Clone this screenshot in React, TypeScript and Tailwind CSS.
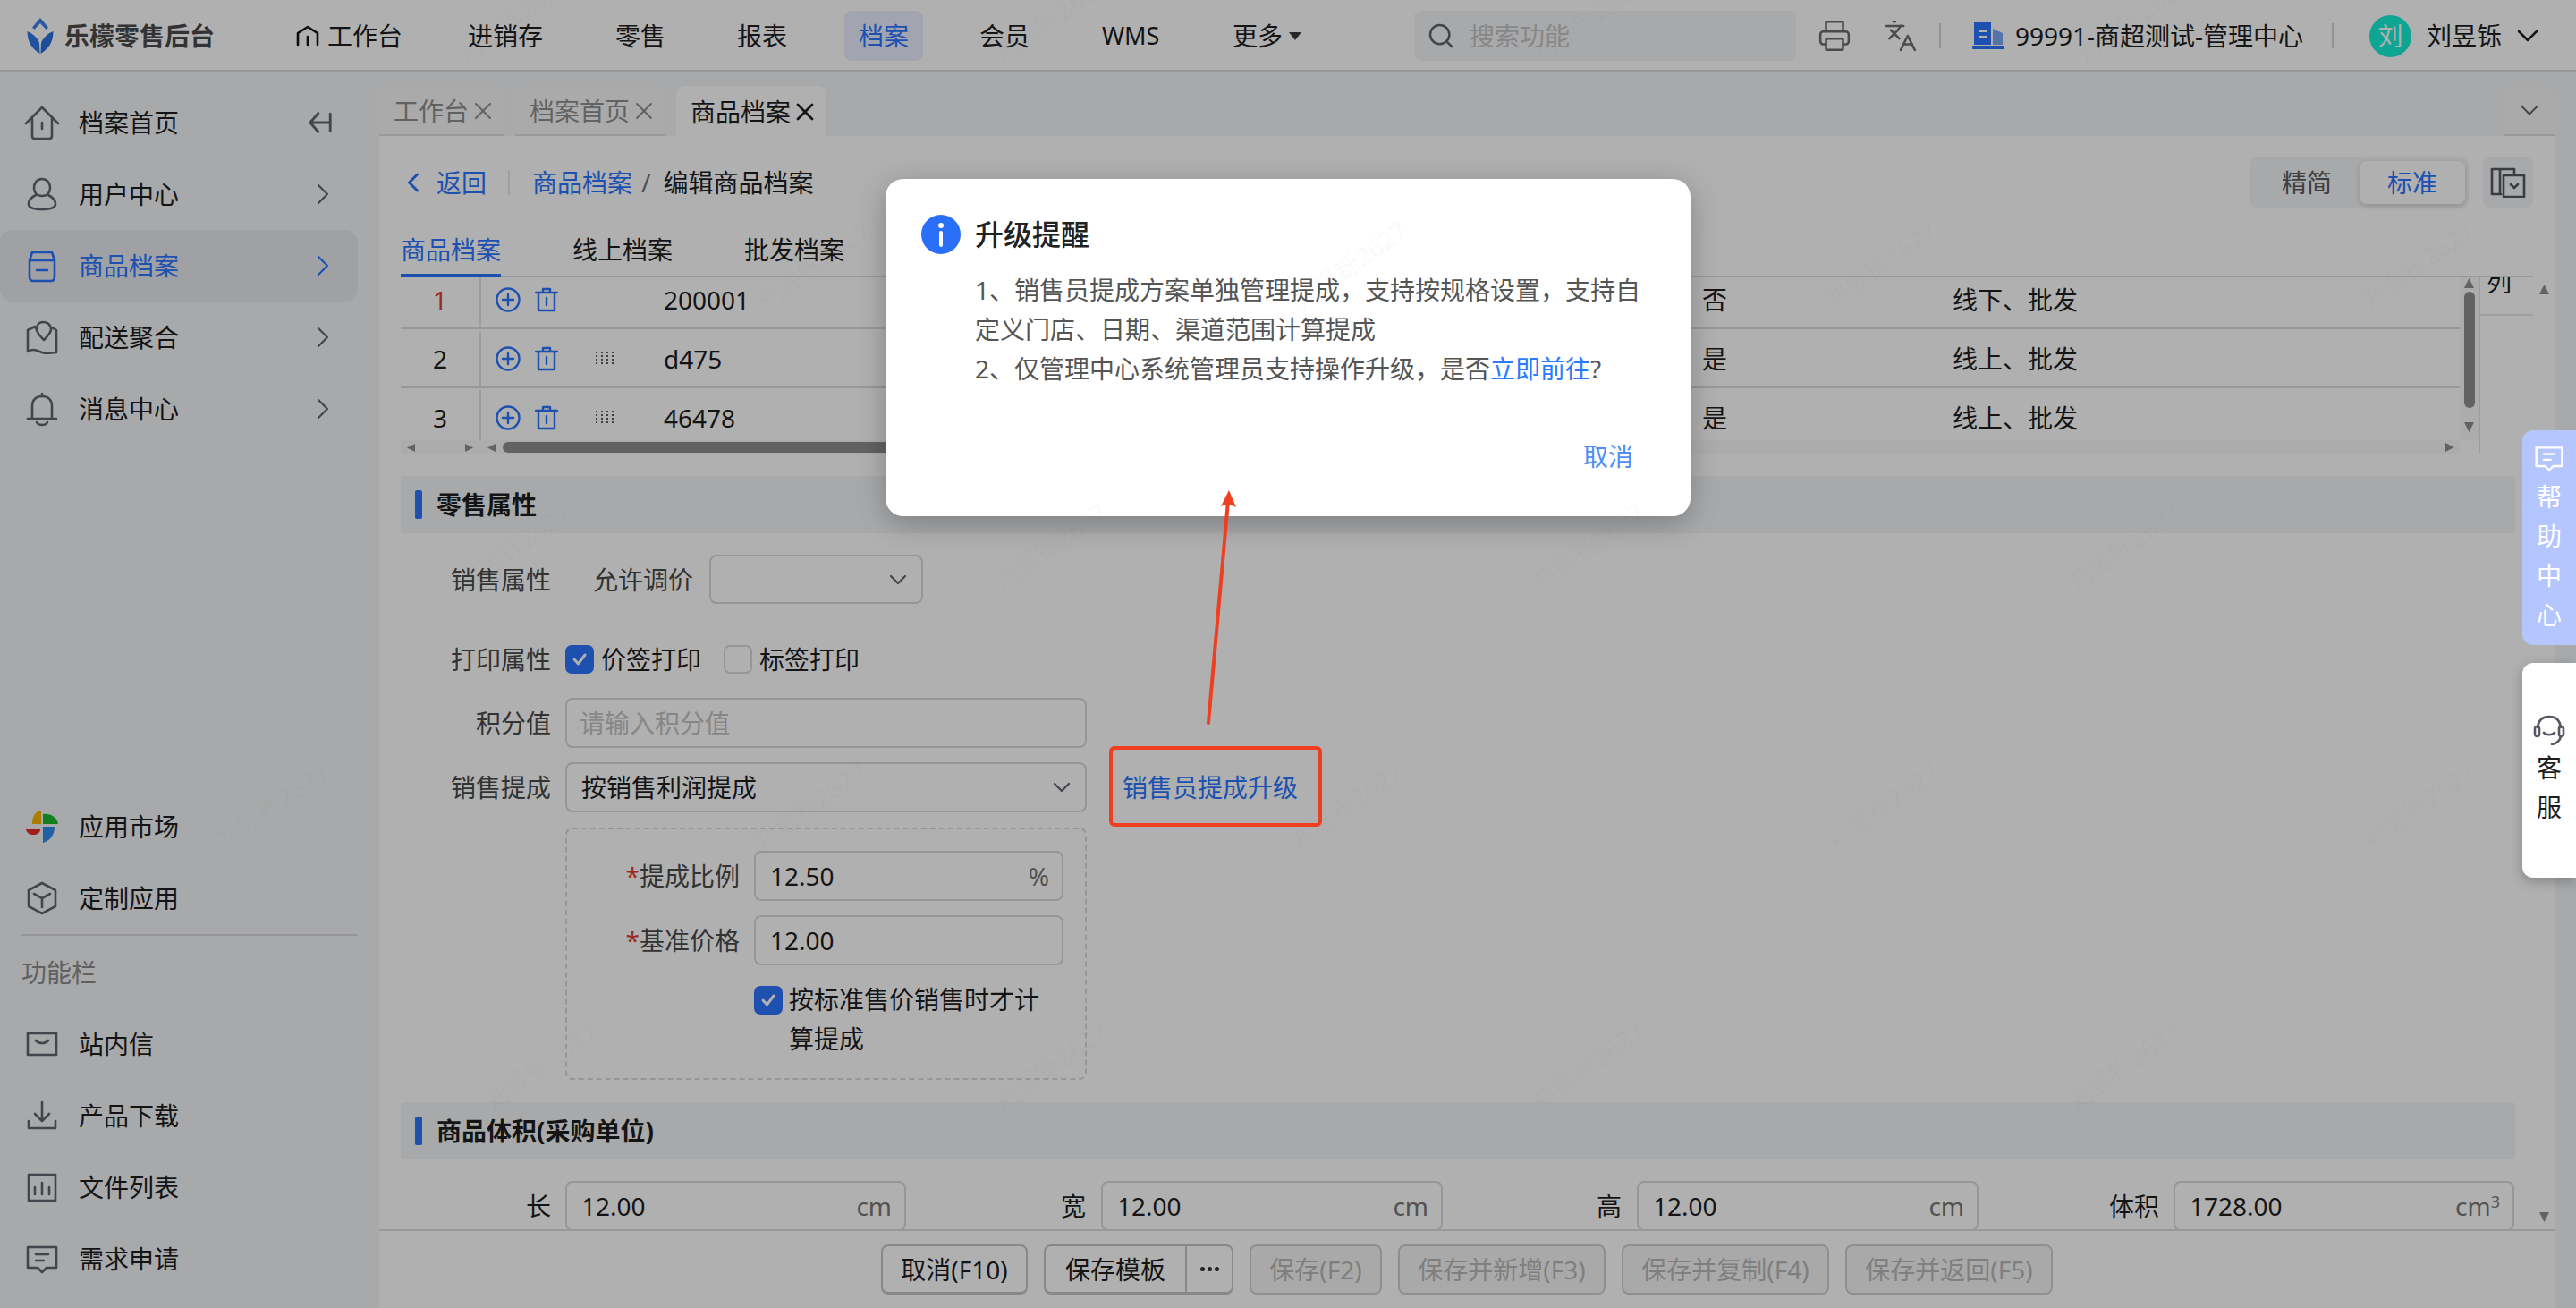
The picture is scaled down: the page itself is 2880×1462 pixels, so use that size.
import type { ReactNode } from 'react'
import { ChevronDown, ChevronLeft, ChevronRight, Languages, Printer, Search, X } from 'lucide-react'

const stroke = '#62656f'

function Logo() {
  return (
    <svg width="30" height="40" viewBox="0 0 29 40">
      <path d="M14.5 0L23.5 10.5L21 13L14.5 6L8 13L5.5 10.5Z" fill="#3a83ee" />
      <path d="M0 15C6 17 12 23 13.5 28L14 40C6 35 0 28 0 15Z" fill="#2f78e6" />
      <path d="M29 15C23 17 17 23 15.5 28L15 40C23 35 29 28 29 15Z" fill="#2a6fdc" />
    </svg>
  )
}

function Icon({ children, w = 40, h = 40, color = stroke }: { children: ReactNode; w?: number; h?: number; color?: string }) {
  return (
    <svg width={w} height={h} viewBox="0 0 40 40" fill="none" stroke={color} strokeWidth="2.6" strokeLinecap="round" strokeLinejoin="round">
      {children}
    </svg>
  )
}

const HomeIcon = () => <Icon><path d="M2 21L20 3L38 21M9 16V35C9 37 10 38 12 38H28C30 38 31 37 31 35V16M20 20V27" /></Icon>
const UserIcon = () => <Icon><path d="M20 3C14 3 11 8 11 13C11 18 14 22 20 22C26 22 29 18 29 13C29 8 26 3 20 3ZM13 21C7 24 5 27 5 31C5 35 9 37 20 37C31 37 35 35 35 31C35 27 33 24 27 21" /></Icon>
const GoodsIcon = ({ color }: { color: string }) => <Icon color={color}><path d="M9 5H31L34 14V32C34 35 33 37 30 37H10C7 37 6 35 6 32V14ZM6 14H34M14 25H26" /></Icon>
const MapIcon = () => <Icon><path d="M12 8L4 12V36C10 32 14 35 20 37C26 39 30 37 36 37V12L31 9M12 8L14 12M21 3C16 3 14 7 14 11C14 15 18 19 22 23C26 19 30 15 30 11C30 7 27 3 21 3Z" /></Icon>
const BellIcon = () => <Icon><path d="M20 3V6M9 31V17C9 10 13 6 20 6C27 6 31 10 31 17V31M4 31H36M14 35C15 37 17 38 20 38C23 38 25 37 26 35" /></Icon>
const CollapseIcon = () => <Icon w={28} h={28}><path d="M17 5L4 20L17 35M5 20H34M36 6V34" strokeWidth="4" /></Icon>

function Pinwheel() {
  return (
    <svg width="36" height="36" viewBox="0 0 36 36">
      <path d="M17 0V15H7C7 7 10 1 17 0Z" fill="#f7b600" />
      <path d="M19 4V15H36C35 8 28 3 19 4Z" fill="#1db92e" />
      <path d="M19 18H32C32 27 27 34 19 36Z" fill="#2f8cf0" />
      <path d="M0 21H16C16 25 12 27 8 27C4 27 1 25 0 21Z" fill="#ee2a2a" />
    </svg>
  )
}

const BoxIcon = () => <Icon><path d="M20 3L35 11V29L20 37L5 29V11ZM11 15L20 20L29 15M20 20V30" /></Icon>
const MailIcon = () => <Icon><path d="M4 8H36V32H4ZM13 16C17 20 23 20 27 16" /></Icon>
const DownloadIcon = () => <Icon><path d="M20 5V24M12 18L20 26L28 18M5 26V34H35V26" /></Icon>
const ChartIcon = () => <Icon><path d="M5 6H35V35H5ZM12 20V28M20 15V28M28 20V28" /></Icon>
const ChatIcon = ({ color = stroke, size = 40 }: { color?: string; size?: number }) => <Icon color={color} w={size} h={size}><path d="M4 7H36V30H25L20 35L15 30H4ZM13 15H27M13 22H22" /></Icon>

function Tri({ dir, size = 10, color = '#8f8f8f' }: { dir: 'up' | 'down' | 'left' | 'right'; size?: number; color?: string }) {
  const points = { up: '5,0 10,10 0,10', down: '0,0 10,0 5,10', left: '10,0 10,10 0,5', right: '0,0 10,5 0,10' }[dir]
  return (
    <svg width={size} height={size} viewBox="0 0 10 10">
      <polygon points={points} fill={color} />
    </svg>
  )
}

function Check() {
  return (
    <span className="flex h-[32px] w-[32px] shrink-0 items-center justify-center rounded-[7px] bg-[#2c75ff]">
      <svg width="22" height="22" viewBox="0 0 22 22" fill="none" stroke="#fff" strokeWidth="3" strokeLinecap="round" strokeLinejoin="round">
        <path d="M5 11L9.5 16L17 6" />
      </svg>
    </span>
  )
}

function SideItem({ icon, label, active, arrow, extra }: { icon: ReactNode; label: string; active?: boolean; arrow?: boolean; extra?: ReactNode }) {
  return (
    <div className={active ? 'flex h-[80px] w-[400px] items-center rounded-r-[14px] rounded-l-[14px] bg-[#e7e9f0]' : 'flex h-[80px] w-[400px] items-center'}>
      <span className="ml-[27px] flex h-[40px] w-[40px] items-center justify-center">{icon}</span>
      <span className={active ? 'ml-[21px] text-[#2c75ff]' : 'ml-[21px] text-[#1d1d1f]'}>{label}</span>
      {arrow && <ChevronRight className="mr-[19px] ml-auto" size={40} strokeWidth={1.3} color={active ? '#2c75ff' : '#62656f'} />}
      {extra}
    </div>
  )
}

function TopNav({ label, className }: { label: string; className: string }) {
  return <span className={className}>{label}</span>
}

function Field({ value, unit, className }: { value: string; unit?: ReactNode; className: string }) {
  return (
    <div className={`flex h-[56px] shrink-0 items-center rounded-[8px] border-2 border-[#d9d9d9] pr-[14px] pl-[16px] ${className}`}>
      <span>{value}</span>
      {unit && <span className="ml-auto text-[#777]">{unit}</span>}
    </div>
  )
}

function Row({ seq, code, flag, channel, first, drag }: { seq: string; code: string; flag: string; channel: string; first?: boolean; drag?: boolean }) {
  return (
    <div className={first ? 'flex h-[66px] shrink-0 items-center border-b-2 border-[#dcdcdc] pt-[2px] -mt-[8px]' : 'flex h-[66px] shrink-0 items-center border-b-2 border-[#dcdcdc] pt-[2px]'}>
      <span className={first ? 'flex h-full w-[90px] items-center justify-center border-r-2 border-[#e4e4e4] text-[#e43d30]' : 'flex h-full w-[90px] items-center justify-center border-r-2 border-[#e4e4e4]'}>{seq}</span>
      <span className="ml-[16px] flex h-[28px] w-[188px] items-center">
        <svg width="28" height="28" viewBox="0 0 28 28" fill="none" stroke="#2c75ff" strokeWidth="2.4" strokeLinecap="round">
          <circle cx="14" cy="14" r="12.5" />
          <path d="M14 8V20M8 14H20" />
        </svg>
        <svg className="ml-[16px]" width="26" height="28" viewBox="0 0 26 28" fill="none" stroke="#2c75ff" strokeWidth="2.4" strokeLinecap="round" strokeLinejoin="round">
          <path d="M1 6H25M9 6V2H17V6M4 6V26H22V6M13 12V20" />
        </svg>
        {drag && (
          <svg className="ml-[42px]" width="22" height="16" viewBox="0 0 22 16" fill="#5f5f5f">
            {[0, 6, 12, 18].flatMap(x => [0, 4, 8, 12].map(y => <rect key={`${x}-${y}`} x={x} y={y} width="2" height="2" />))}
          </svg>
        )}
      </span>
      <span className="w-[1161px]">{code}</span>
      <span className="w-[280px]">{flag}</span>
      <span>{channel}</span>
    </div>
  )
}

function FootBtn({ label, className, off }: { label: string; className: string; off?: boolean }) {
  return (
    <span className={off
      ? `flex h-[56px] shrink-0 items-center justify-center rounded-[8px] border-2 border-[#d0d0d0] bg-[#f5f5f5] text-[#b9b9b9] ${className}`
      : `flex h-[56px] shrink-0 items-center justify-center rounded-[8px] border-2 border-b-[3px] border-[#c6c6c6] ${className}`}>
      {label}
    </span>
  )
}

const marks = [
  [570, 20], [1170, 20], [1770, 20], [2380, 20],
  [905, 295], [1505, 295], [2097, 295], [2698, 295],
  [570, 610], [1170, 610], [1770, 610], [2370, 610],
  [300, 900], [900, 900], [1500, 900], [2100, 900], [2700, 900],
  [600, 1190], [1170, 1190], [1770, 1190], [2370, 1190],
]

export default function App() {
  return (
    <div className="relative h-[1462px] w-[2880px] overflow-hidden bg-white font-[family-name:'Noto_Sans','Noto_Sans_CJK_SC',sans-serif] text-[28px] text-[#1d1d1f]">
      {/* Header */}
      <header className="flex h-[80px] items-center border-b-2 border-[#dcdcdc] bg-white pt-[2px]">
        <span className="ml-[30px]"><Logo /></span>
        <span className="ml-[12px] w-[168px] font-bold whitespace-nowrap text-[#4a4a4a]">乐檬零售后台</span>
        <svg className="ml-[91px]" width="26" height="24" viewBox="0 0 26 24" fill="none" stroke="#111" strokeWidth="2.6" strokeLinecap="round" strokeLinejoin="round">
          <path d="M2 22V9L13 2L24 9V22M13 13V22" />
        </svg>
        <TopNav label="工作台" className="ml-[9px] w-[84px] whitespace-nowrap" />
        <TopNav label="进销存" className="ml-[73px] w-[84px] whitespace-nowrap" />
        <TopNav label="零售" className="ml-[81px] w-[56px] whitespace-nowrap" />
        <TopNav label="报表" className="ml-[80px] w-[56px] whitespace-nowrap" />
        <span className="ml-[64px] flex h-[56px] w-[88px] items-center justify-center rounded-[8px] bg-[#ebf0ff] text-[#2c75ff]">档案</span>
        <TopNav label="会员" className="ml-[63px] w-[56px] whitespace-nowrap" />
        <span className="ml-[81px] w-[68px] text-[27px]">WMS</span>
        <TopNav label="更多" className="ml-[78px] w-[56px] whitespace-nowrap" />
        <svg className="ml-[7px]" width="14" height="9" viewBox="0 0 14 9">
          <polygon points="0,0 14,0 7,9" fill="#3a3a3a" />
        </svg>
        <div className="ml-[126px] flex h-[56px] w-[427px] items-center rounded-[8px] bg-[#f4f5f7]">
          <Search className="ml-[14px]" size={32} strokeWidth={1.9} color="#62656f" />
          <span className="ml-[16px] text-[#c4c4c4]">搜索功能</span>
        </div>
        <Printer className="ml-[24px]" size={38} strokeWidth={1.6} color="#6d6d6d" />
        <Languages className="ml-[36px]" size={38} strokeWidth={1.6} color="#6d6d6d" />
        <span className="ml-[24px] h-[28px] w-[2px] bg-[#d6d6d6]" />
        <svg className="ml-[35px]" width="36" height="30" viewBox="0 0 36 30">
          <path d="M2 0H21V25H2Z" fill="#2c75ff" />
          <path d="M23 7L34 12V25H23Z" fill="#7ea8f5" />
          <rect x="0" y="26" width="36" height="4" rx="1" fill="#2c75ff" />
          <rect x="8" y="8" width="8" height="3" fill="#fff" />
          <rect x="8" y="15" width="8" height="3" fill="#fff" />
        </svg>
        <span className="ml-[12px] w-[321px] whitespace-nowrap">99991-商超测试-管理中心</span>
        <span className="ml-[33px] h-[28px] w-[2px] bg-[#d6d6d6]" />
        <span className="ml-[40px] flex h-[47px] w-[47px] items-center justify-center rounded-full bg-[#17f0d5] text-white">刘</span>
        <span className="ml-[17px] w-[84px] whitespace-nowrap">刘昱铄</span>
        <ChevronDown className="ml-[9px]" size={40} strokeWidth={1.5} color="#222" />
      </header>

      <div className="flex h-[1382px]">
        {/* Sidebar */}
        <aside className="flex w-[424px] shrink-0 flex-col bg-[#f4f5f7] pt-[17px]">
          <SideItem
            icon={<HomeIcon />}
            label="档案首页"
            extra={<span className="mr-[28px] ml-auto"><CollapseIcon /></span>}
          />
          <SideItem icon={<UserIcon />} label="用户中心" arrow />
          <SideItem icon={<GoodsIcon color="#2c75ff" />} label="商品档案" arrow active />
          <SideItem icon={<MapIcon />} label="配送聚合" arrow />
          <SideItem icon={<BellIcon />} label="消息中心" arrow />
          <div className="mt-[387px]">
            <SideItem icon={<Pinwheel />} label="应用市场" />
            <SideItem icon={<BoxIcon />} label="定制应用" />
          </div>
          <div className="ml-[24px] h-[2px] w-[376px] bg-[#d9d9dc]" />
          <div className="flex h-[81px] items-center pl-[24px] text-[#8c8c8c]">功能栏</div>
          <SideItem icon={<MailIcon />} label="站内信" />
          <SideItem icon={<DownloadIcon />} label="产品下载" />
          <SideItem icon={<ChartIcon />} label="文件列表" />
          <SideItem icon={<ChatIcon />} label="需求申请" />
        </aside>

        <div className="flex w-[2432px] shrink-0 flex-col">
          {/* Open tabs */}
          <div className="flex h-[72px] shrink-0 items-end bg-[#f4f5f7]">
            <div className="flex h-[56px] w-[140px] items-center rounded-t-[10px] border-b-2 border-[#dcdcdc] bg-[#f7f7f8] pt-[2px] pl-[16px] text-[#8e8e8e]">
              工作台<X size={32} strokeWidth={1.5} />
            </div>
            <div className="ml-[12px] flex h-[56px] w-[168px] items-center rounded-t-[10px] border-b-2 border-[#dcdcdc] bg-[#f7f7f8] pt-[2px] pl-[16px] text-[#8e8e8e]">
              档案首页<X size={32} strokeWidth={1.5} />
            </div>
            <div className="ml-[12px] flex h-[56px] w-[168px] items-center rounded-t-[10px] bg-white pt-[2px] pl-[16px]">
              商品档案<X size={32} strokeWidth={2} />
            </div>
            <div className="ml-auto flex h-[56px] w-[56px] items-center justify-center rounded-t-[10px] border-b-2 border-[#dcdcdc] bg-[#f7f7f8]">
              <ChevronDown size={36} strokeWidth={1.3} color="#62656f" />
            </div>
          </div>

          <main className="flex h-[1222px] flex-col overflow-hidden bg-white pl-[24px]">
            {/* Breadcrumb */}
            <div className="mt-[24px] flex h-[56px] w-[2384px] shrink-0 items-center">
              <ChevronLeft className="ml-[-4px]" size={36} strokeWidth={2} color="#2c75ff" />
              <span className="ml-[8px] text-[#2c75ff]">返回</span>
              <span className="ml-[24px] h-[28px] w-[2px] bg-[#e6e6e6]" />
              <span className="ml-[25px] text-[#2c75ff]">商品档案</span>
              <span className="ml-[10px] text-[#777]">/</span>
              <span className="ml-[14px]">编辑商品档案</span>
              <div className="ml-auto flex h-[56px] w-[244px] items-center rounded-[8px] bg-[#f4f5f7] pl-[35px]">
                <span className="text-[#5a5a5a]">精简</span>
                <span className="ml-[31px] flex h-[48px] w-[118px] items-center justify-center rounded-[8px] bg-white text-[#2c75ff] shadow-[0_2px_6px_rgba(0,0,0,0.15)]">标准</span>
              </div>
              <div className="ml-[16px] flex h-[56px] w-[56px] items-center justify-center rounded-[8px] bg-[#f4f5f7]">
                <svg width="42" height="34" viewBox="0 0 42 34" fill="none" stroke="#55585f" strokeWidth="2.6" strokeLinejoin="round" strokeLinecap="round">
                  <path d="M13 30H3V2H28V8M12 2V30M16 9H39V33H16ZM24 19L28 23L32 19" />
                </svg>
              </div>
            </div>

            {/* Sub tabs */}
            <div className="flex h-[78px] w-[2384px] shrink-0 items-end border-b-2 border-[#dcdcdc]">
              <span className="-mb-[2px] flex h-[60px] w-[112px] items-center border-b-4 border-[#2c75ff] pt-[2px] text-[#2c75ff]">商品档案</span>
              <span className="-mb-[2px] ml-[80px] flex h-[60px] items-center pt-[2px] pb-[4px]">线上档案</span>
              <span className="-mb-[2px] ml-[80px] flex h-[60px] items-center pt-[2px] pb-[4px]">批发档案</span>
            </div>

            <div className="flex h-[1064px] w-[2408px] shrink-0">
              <div className="w-[2384px] shrink-0">
                {/* Table */}
                <div className="flex h-[198px]">
                  <div className="w-[2302px] shrink-0">
                    <div className="flex h-[182px] flex-col overflow-hidden">
                      <Row seq="1" code="200001" flag="否" channel="线下、批发" first />
                      <Row seq="2" code="d475" flag="是" channel="线上、批发" drag />
                      <Row seq="3" code="46478" flag="是" channel="线上、批发" drag />
                    </div>
                    <div className="flex h-[16px] items-center bg-[#fafafa]">
                      <span className="ml-[7px]"><Tri dir="left" size={9} /></span>
                      <span className="ml-[56px]"><Tri dir="right" size={9} /></span>
                      <span className="ml-[16px]"><Tri dir="left" size={9} /></span>
                      <span className="ml-[8px] h-[12px] w-[700px] rounded-full bg-[#8e8e8e]" />
                      <span className="mr-[6px] ml-auto"><Tri dir="right" size={10} /></span>
                    </div>
                  </div>
                  <div className="flex h-[182px] w-[21px] shrink-0 flex-col items-center bg-[#fafafa] pt-[1px]">
                    <Tri dir="up" size={11} />
                    <span className="mt-[4px] h-[130px] w-[12px] rounded-full bg-[#8e8e8e]" />
                    <span className="mt-[16px]"><Tri dir="down" size={11} /></span>
                  </div>
                  <div className="w-[61px] shrink-0 overflow-hidden border-l-2 border-[#e4e4e4]">
                    <div className="-mt-[32px] flex h-[75px] items-center border-b-2 border-[#e6e6e6] pl-[7px]">列</div>
                  </div>
                </div>

                {/* Retail section */}
                <div className="mt-[24px] flex h-[64px] w-[2364px] items-center rounded-[4px] bg-[#f4f5f7] pl-[16px]">
                  <span className="h-[32px] w-[8px] rounded-[2px] bg-[#2c75ff]" />
                  <span className="ml-[16px] font-bold">零售属性</span>
                </div>

                <div className="mt-[24px] flex h-[55px] items-center">
                  <span className="w-[168px] text-right text-[#4a4a4a]">销售属性</span>
                  <span className="ml-[47px] w-[112px] text-[#4a4a4a]">允许调价</span>
                  <div className="ml-[18px] flex h-[55px] w-[239px] items-center justify-end rounded-[8px] border-2 border-[#d9d9d9] pr-[10px]">
                    <ChevronDown size={32} strokeWidth={1.7} color="#62656f" />
                  </div>
                </div>

                <div className="mt-[34px] flex h-[56px] items-center">
                  <span className="w-[168px] text-right text-[#4a4a4a]">打印属性</span>
                  <span className="ml-[16px]"><Check /></span>
                  <span className="ml-[8px] w-[112px]">价签打印</span>
                  <span className="ml-[25px] h-[32px] w-[32px] rounded-[7px] border-2 border-[#d9d9d9]" />
                  <span className="ml-[8px] w-[112px]">标签打印</span>
                </div>

                <div className="mt-[15px] flex h-[56px] items-center">
                  <span className="w-[168px] text-right text-[#4a4a4a]">积分值</span>
                  <div className="ml-[16px] flex h-[56px] w-[583px] items-center rounded-[8px] border-2 border-[#d9d9d9] pl-[14px] text-[#c4c4c4]">请输入积分值</div>
                </div>

                <div className="mt-[16px] flex h-[56px] items-center">
                  <span className="w-[168px] text-right text-[#4a4a4a]">销售提成</span>
                  <div className="ml-[16px] flex h-[56px] w-[583px] items-center justify-between rounded-[8px] border-2 border-[#d9d9d9] pr-[10px] pl-[16px]">
                    按销售利润提成
                    <ChevronDown size={32} strokeWidth={1.7} color="#62656f" />
                  </div>
                  <span className="ml-[40px] whitespace-nowrap text-[#2c75ff]">销售员提成升级</span>
                </div>

                {/* Commission box */}
                <div className="mt-[17px] ml-[184px] h-[282px] w-[583px] rounded-[8px] border-2 border-dashed border-[#d9d9d9] pt-[24px]">
                  <div className="flex h-[55px] items-center">
                    <span className="w-[193px] text-right text-[#4a4a4a]"><span className="text-[#e43d30]">*</span>提成比例</span>
                    <Field className="ml-[16px] w-[346px]" value="12.50" unit="%" />
                  </div>
                  <div className="mt-[17px] flex h-[55px] items-center">
                    <span className="w-[193px] text-right text-[#4a4a4a]"><span className="text-[#e43d30]">*</span>基准价格</span>
                    <Field className="ml-[16px] w-[346px]" value="12.00" />
                  </div>
                  <div className="mt-[17px] ml-[209px] flex">
                    <span className="mt-[7px]"><Check /></span>
                    <span className="ml-[7px] w-[282px] leading-[44px]">按标准售价销售时才计算提成</span>
                  </div>
                </div>

                {/* Volume section */}
                <div className="mt-[25px] flex h-[64px] w-[2364px] items-center rounded-[4px] bg-[#f4f5f7] pl-[16px]">
                  <span className="h-[32px] w-[8px] rounded-[2px] bg-[#2c75ff]" />
                  <span className="ml-[16px] font-bold whitespace-nowrap">商品体积(采购单位)</span>
                </div>

                <div className="mt-[24px] flex h-[56px] items-center">
                  <span className="w-[168px] text-right">长</span>
                  <Field className="ml-[16px] w-[381px]" value="12.00" unit="cm" />
                  <span className="w-[201px] text-right">宽</span>
                  <Field className="ml-[17px] w-[382px]" value="12.00" unit="cm" />
                  <span className="w-[200px] text-right">高</span>
                  <Field className="ml-[17px] w-[382px]" value="12.00" unit="cm" />
                  <span className="w-[202px] text-right">体积</span>
                  <Field className="ml-[16px] w-[381px]" value="1728.00" unit={<>cm<sup className="text-[18px]">3</sup></>} />
                </div>
              </div>

              <div className="flex w-[24px] shrink-0 flex-col items-center justify-between pt-[8px] pb-[8px]">
                <Tri dir="up" size={11} />
                <Tri dir="down" size={11} />
              </div>
            </div>
          </main>

          {/* Footer */}
          <footer className="flex h-[88px] shrink-0 items-center border-t-2 border-[#dcdcdc] bg-white pl-[561px]">
            <FootBtn label="取消(F10)" className="w-[164px]" />
            <div className="ml-[18px] flex h-[56px] w-[212px] shrink-0 items-center rounded-[8px] border-2 border-b-[3px] border-[#c6c6c6]">
              <span className="flex w-[156px] items-center justify-center">保存模板</span>
              <span className="flex h-full flex-1 items-center justify-center gap-[3px] border-l-2 border-[#c6c6c6]">
                <span className="h-[5px] w-[5px] rounded-full bg-[#333]" />
                <span className="h-[5px] w-[5px] rounded-full bg-[#333]" />
                <span className="h-[5px] w-[5px] rounded-full bg-[#333]" />
              </span>
            </div>
            <FootBtn off label="保存(F2)" className="ml-[18px] w-[148px]" />
            <FootBtn off label="保存并新增(F3)" className="ml-[18px] w-[232px]" />
            <FootBtn off label="保存并复制(F4)" className="ml-[18px] w-[232px]" />
            <FootBtn off label="保存并返回(F5)" className="ml-[18px] w-[232px]" />
          </footer>
        </div>

        <div className="w-[24px] shrink-0 bg-[#f4f5f7]" />
      </div>

      {/* Dim layer */}
      <div className="absolute inset-0 z-10 bg-[rgba(0,0,0,0.31)]" />

      {/* Upgrade dialog */}
      <div className="absolute top-[200px] left-[990px] z-20 h-[377px] w-[900px] rounded-[20px] bg-white pt-[40px] pl-[40px] shadow-[0_8px_32px_rgba(0,0,0,0.25)]">
        <div className="flex items-center">
          <span className="flex h-[44px] w-[44px] items-center justify-center rounded-full bg-[#2a6ff8]">
            <svg width="8" height="28" viewBox="0 0 8 28" fill="#fff">
              <circle cx="4" cy="4" r="3" />
              <rect x="2" y="10" width="4" height="18" rx="2" />
            </svg>
          </span>
          <span className="ml-[16px] text-[32px] leading-[44px] font-medium text-[#222]">升级提醒</span>
        </div>
        <div className="mt-[18px] ml-[60px] text-[#555] leading-[44px]">
          <div className="whitespace-nowrap">1、销售员提成方案单独管理提成，支持按规格设置，支持自</div>
          <div className="whitespace-nowrap">定义门店、日期、渠道范围计算提成</div>
          <div className="whitespace-nowrap">2、仅管理中心系统管理员支持操作升级，是否<span className="text-[#2a7bff]">立即前往</span>?</div>
        </div>
        <div className="absolute right-[64px] bottom-[46px] text-[#4f8df9]">取消</div>
      </div>

      {/* Annotation: arrow and frame */}
      <svg className="absolute top-[540px] left-[1340px] z-30" width="50" height="275" viewBox="0 0 50 275" fill="none">
        <path d="M11 268L33 20" stroke="#f03e20" strokeWidth="4" strokeLinecap="round" />
        <path d="M34 8L42 27L33 23L25 26Z" fill="#f03e20" />
      </svg>
      <div className="absolute top-[834px] left-[1240px] z-30 h-[90px] w-[238px] rounded-[6px] border-4 border-[#f03e20]" />

      {/* Floating side panels */}
      <div className="absolute top-[481px] right-0 z-30 flex h-[240px] w-[60px] flex-col items-center rounded-l-[12px] bg-[#b5c6ff] pt-[13px] text-white">
        <ChatIcon color="#fff" size={36} />
        <span className="mt-[3px] leading-[44px]">帮</span>
        <span className="leading-[44px]">助</span>
        <span className="leading-[44px]">中</span>
        <span className="leading-[44px]">心</span>
      </div>
      <div className="absolute top-[741px] right-0 z-30 flex h-[240px] w-[60px] flex-col items-center rounded-l-[12px] bg-white pt-[58px] shadow-[0_4px_14px_rgba(0,0,0,0.25)]">
        <svg width="36" height="34" viewBox="0 0 36 34" fill="none" stroke="#555863" strokeWidth="2.6" strokeLinecap="round">
          <path d="M5 14C6 6 11 2 18 2C25 2 30 6 31 14M31 24C30 29 26 32 21 33M12 20C15 23 21 23 24 20" />
          <rect x="2" y="13" width="5" height="11" rx="2.5" />
          <rect x="29" y="13" width="5" height="11" rx="2.5" />
        </svg>
        <span className="mt-[3px] leading-[44px]">客</span>
        <span className="leading-[44px]">服</span>
      </div>

      {/* Watermark */}
      <div className="pointer-events-none absolute inset-0 z-40 overflow-hidden">
        {marks.map(([x, y]) => (
          <span
            key={`${x}-${y}`}
            className="absolute -rotate-[35deg] whitespace-nowrap text-[28px] text-[rgba(90,90,90,0.035)]"
            style={{ left: x - 70, top: y - 20 }}
          >
            刘昱铄2627
          </span>
        ))}
      </div>
    </div>
  )
}
